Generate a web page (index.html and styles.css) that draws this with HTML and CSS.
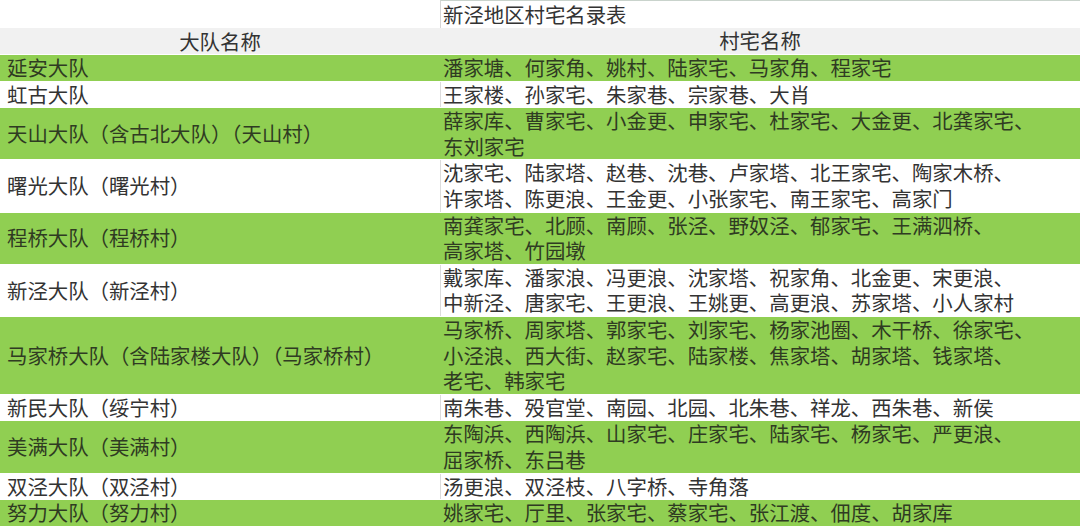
FILE: index.html
```html
<!DOCTYPE html>
<html lang="zh-CN">
<head>
<meta charset="utf-8">
<title>新泾地区村宅名录表</title>
<link rel="stylesheet" href="styles.css">
</head>
<body>
<div class="sheet">
  <div class="row title-row">
    <div class="c1"></div>
    <div class="c2 title">新泾地区村宅名录表</div>
  </div>
  <div class="row head-row">
    <div class="c1 head">大队名称</div>
    <div class="c2 head">村宅名称</div>
  </div>
  <div class="row green">
    <div class="c1">延安大队</div>
    <div class="c2">潘家塘、何家角、姚村、陆家宅、马家角、程家宅</div>
  </div>
  <div class="row white">
    <div class="c1">虹古大队</div>
    <div class="c2">王家楼、孙家宅、朱家巷、宗家巷、大肖</div>
  </div>
  <div class="row green">
    <div class="c1">天山大队（含古北大队）（天山村）</div>
    <div class="c2">薛家库、曹家宅、小金更、申家宅、杜家宅、大金更、北龚家宅、<br>东刘家宅</div>
  </div>
  <div class="row white">
    <div class="c1">曙光大队（曙光村）</div>
    <div class="c2">沈家宅、陆家塔、赵巷、沈巷、卢家塔、北王家宅、陶家木桥、<br>许家塔、陈更浪、王金更、小张家宅、南王家宅、高家门</div>
  </div>
  <div class="row green">
    <div class="c1">程桥大队（程桥村）</div>
    <div class="c2">南龚家宅、北顾、南顾、张泾、野奴泾、郁家宅、王满泗桥、<br>高家塔、竹园墩</div>
  </div>
  <div class="row white">
    <div class="c1">新泾大队（新泾村）</div>
    <div class="c2">戴家库、潘家浪、冯更浪、沈家塔、祝家角、北金更、宋更浪、<br>中新泾、唐家宅、王更浪、王姚更、高更浪、苏家塔、小人家村</div>
  </div>
  <div class="row green">
    <div class="c1">马家桥大队（含陆家楼大队）（马家桥村）</div>
    <div class="c2">马家桥、周家塔、郭家宅、刘家宅、杨家池圈、木干桥、徐家宅、<br>小泾浪、西大街、赵家宅、陆家楼、焦家塔、胡家塔、钱家塔、<br>老宅、韩家宅</div>
  </div>
  <div class="row white">
    <div class="c1">新民大队（绥宁村）</div>
    <div class="c2">南朱巷、殁官堂、南园、北园、北朱巷、祥龙、西朱巷、新侯</div>
  </div>
  <div class="row green">
    <div class="c1">美满大队（美满村）</div>
    <div class="c2">东陶浜、西陶浜、山家宅、庄家宅、陆家宅、杨家宅、严更浪、<br>屈家桥、东吕巷</div>
  </div>
  <div class="row white">
    <div class="c1">双泾大队（双泾村）</div>
    <div class="c2">汤更浪、双泾枝、八字桥、寺角落</div>
  </div>
  <div class="row green">
    <div class="c1">努力大队（努力村）</div>
    <div class="c2">姚家宅、厅里、张家宅、蔡家宅、张江渡、佃度、胡家库</div>
  </div>
</div>
</body>
</html>
```

FILE: styles.css
```css
html, body {
  margin: 0;
  padding: 0;
  background: #ffffff;
}

body {
  font-family: "Noto Sans CJK SC", "Noto Sans", sans-serif;
  font-size: 20.4px;
  color: #333333;
  width: 1080px;
  height: 526px;
  overflow: hidden;
}

.sheet {
  display: flex;
  flex-direction: column;
}

.row {
  display: grid;
  grid-template-columns: 440px 1fr;
  line-height: 25.6px;
  border-bottom: 1px solid #ffffff;
}

.c1 {
  padding-left: 7px;
  display: flex;
  align-items: center;
  white-space: nowrap;
}

.c2 {
  padding-left: 3px;
  white-space: nowrap;
}

.title-row {
  height: 28px;
  border-bottom: none;
}

.title-row .c2 {
  border-top: 1px solid #c9d3cc;
  border-left: 1px solid #d6d6d6;
  padding-left: 2px;
  line-height: 26px;
}

.head-row {
  background: #f1f1f1;
  height: 26px;
  line-height: 25px;
}

.head {
  justify-content: center;
  text-align: center;
  padding-left: 0;
}

.green {
  background: #90cf52;
  color: #2f3b22;
}

.white {
  background: #ffffff;
}

.white .c2 {
  border-left: 1px solid #dcdcdc;
  padding-left: 2px;
}
```
